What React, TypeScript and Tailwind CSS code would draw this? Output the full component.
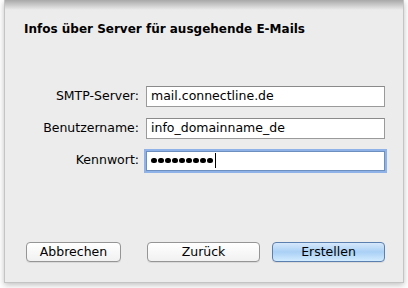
import React from "react";

const font = { fontFamily: '"DejaVu Sans", "Lucida Grande", sans-serif' };

function Field({ label, value, focused, password }: { label: string; value: string; focused?: boolean; password?: boolean }) {
  return (
    <div className="flex items-center h-[21px]">
      <div className="w-[118px] text-right text-[12.5px] text-black pr-[7px] whitespace-nowrap">{label}</div>
      <div
        className={
          focused
            ? "w-[239px] h-[20px] bg-white border border-[#6c8fc0] shadow-[0_0_0_2px_#8fb3e8] flex items-center pl-[4px]"
            : "w-[239px] h-[21px] bg-white border border-[#9a9a9a] border-t-[#8a8a8a] flex items-center pl-[4px]"
        }
      >
        {password ? (
          <span className="flex items-center gap-[1.5px]">
            {Array.from({ length: 9 }).map((_, i) => (
              <span key={i} className="inline-block w-[5.5px] h-[5.5px] rounded-full bg-black" />
            ))}
            <span className="inline-block w-[1px] h-[15px] bg-black ml-[1px]" />
          </span>
        ) : (
          <span className="text-[12.5px] text-black leading-none">{value}</span>
        )}
      </div>
    </div>
  );
}

function Btn({ label, w, primary }: { label: string; w: string; primary?: boolean }) {
  return (
    <div
      className={
        (primary
          ? "bg-gradient-to-b from-[#d6e8fb] via-[#a9d0f5] to-[#d2ebff] border-[#5b7fae] "
          : "bg-gradient-to-b from-white to-[#f1f1f1] border-[#959595] ") +
        w +
        " h-[20px] border rounded-[4px] flex items-center justify-center text-[12.5px] text-black shadow-[0_1px_0_rgba(0,0,0,0.08)]"
      }
    >
      {label}
    </div>
  );
}

export default function App() {
  return (
    <div className="w-[408px] h-[288px] bg-white relative overflow-hidden" style={font}>
      <div className="ml-[4px] w-[400px] h-[283px] bg-[#ececec] border-x border-b border-[#c4c4c4] shadow-[0_2px_6px_rgba(0,0,0,0.25)] relative flex flex-col">
        <div className="absolute inset-x-0 top-0 h-[10px] bg-gradient-to-b from-[#a8a8a8] to-transparent" />
        <div className="pt-[20px] pl-[19px] text-[12px] font-bold text-black">Infos über Server für ausgehende E-Mails</div>
        <div className="mt-[48px] flex flex-col gap-[11px] pl-[23px]">
          <Field label="SMTP-Server:" value="mail.connectline.de" />
          <Field label="Benutzername:" value="info_domainname_de" />
          <Field label="Kennwort:" value="" focused password />
        </div>
        <div className="mt-auto mb-[20px] flex items-center pl-[21px]">
          <Btn label="Abbrechen" w="w-[95px]" />
          <div className="w-[26px]" />
          <Btn label="Zurück" w="w-[113px]" />
          <div className="w-[12px]" />
          <Btn label="Erstellen" w="w-[113px]" primary />
        </div>
      </div>
    </div>
  );
}
